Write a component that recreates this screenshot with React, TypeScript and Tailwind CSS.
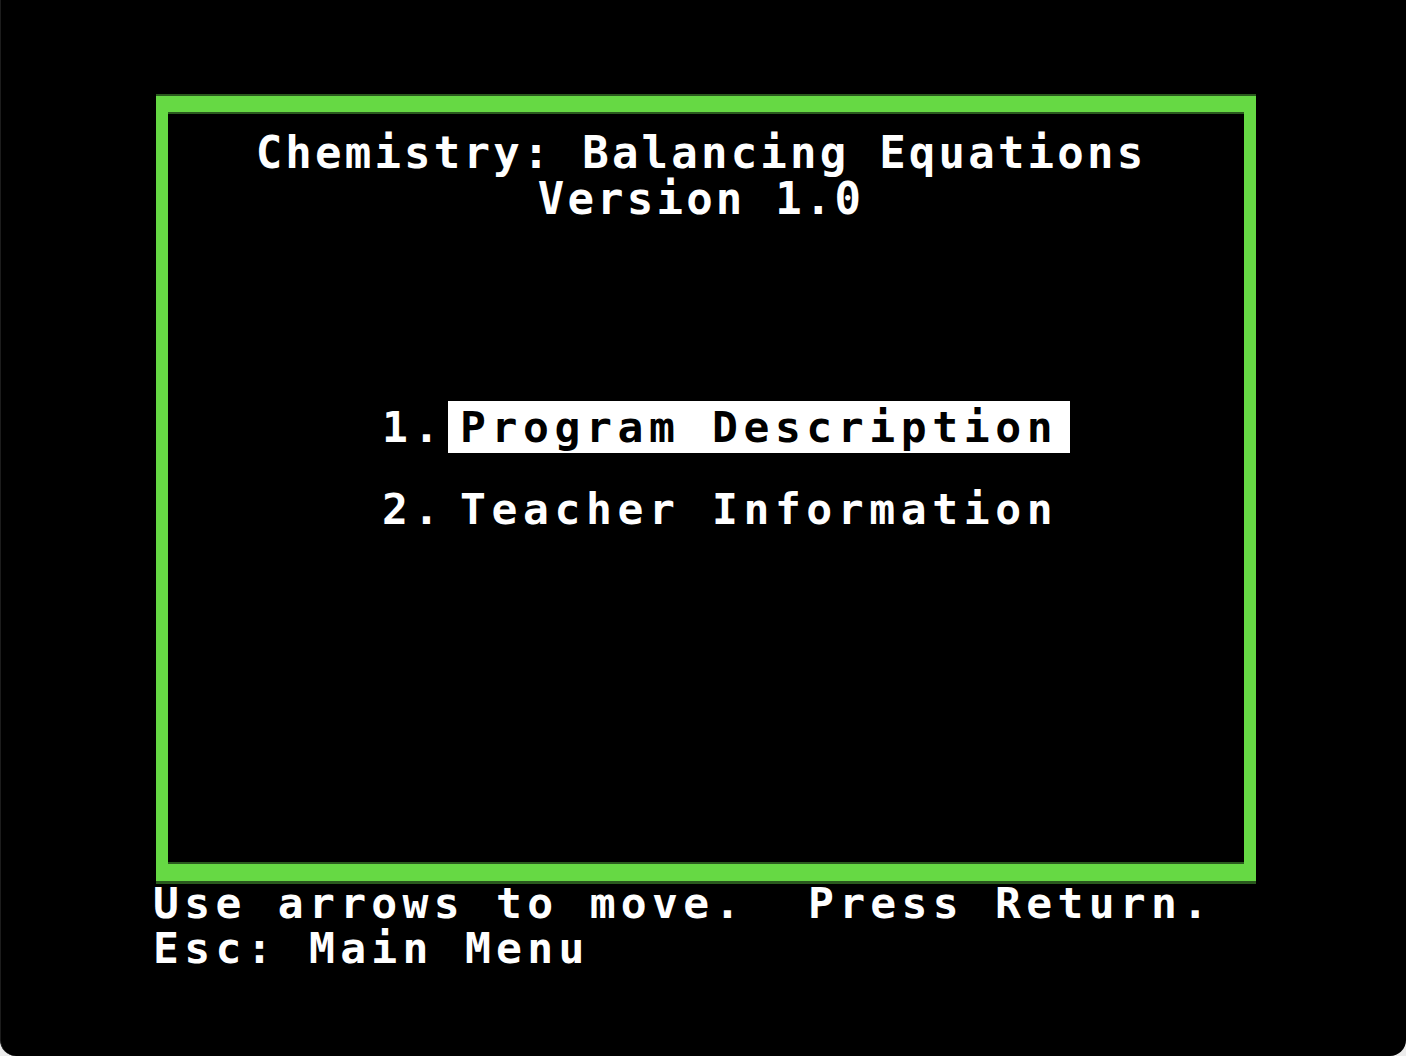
const menu = [
  { n: "1.", label: "Program Description", selected: true },
  { n: "2.", label: "Teacher Information", selected: false },
]

export default function App() {
  return (
    <div className="h-[1056px] w-[1406px] bg-[#ececec]">
      <div className="flex h-full flex-col rounded-b-[16px] border-l border-[#1c1c1c] bg-black pl-[155px] pt-[96px] font-['DejaVu_Sans_Mono',monospace] font-bold text-white">
        {/* green frame */}
        <div className="flex h-[785px] w-[1100px] flex-col border-x-[12px] border-y-[16px] border-b-[17px] border-[#66d944] shadow-[0_-2px_0_#2a5a1e,0_3px_0_#2a5a1e,inset_0_2px_0_#2a5a1e,inset_0_-2px_0_#2a5a1e]">
          <div className="pt-[18px] pr-[10px] text-center text-[44px] leading-[46px] tracking-[3.2px]">
            <div>Chemistry: Balancing Equations</div>
            <div>Version 1.0</div>
          </div>

          <div className="mt-[179px] flex flex-col gap-[30px] pl-[214px] text-[43px] leading-[52px] tracking-[5.6px]">
            {menu.map((m) => (
              <div key={m.n} className="flex">
                <span className="w-[66px]">{m.n}</span>
                <span className={m.selected ? "bg-white pl-[12px] pr-[12px] text-black" : "pl-[12px] pr-[12px]"}>
                  {m.label}
                </span>
              </div>
            ))}
          </div>
        </div>

        <div className="-ml-[3px] whitespace-pre text-[43px] leading-[45px] tracking-[5.3px]">
          <div>Use arrows to move.  Press Return.</div>
          <div>Esc: Main Menu</div>
        </div>
      </div>
    </div>
  )
}
